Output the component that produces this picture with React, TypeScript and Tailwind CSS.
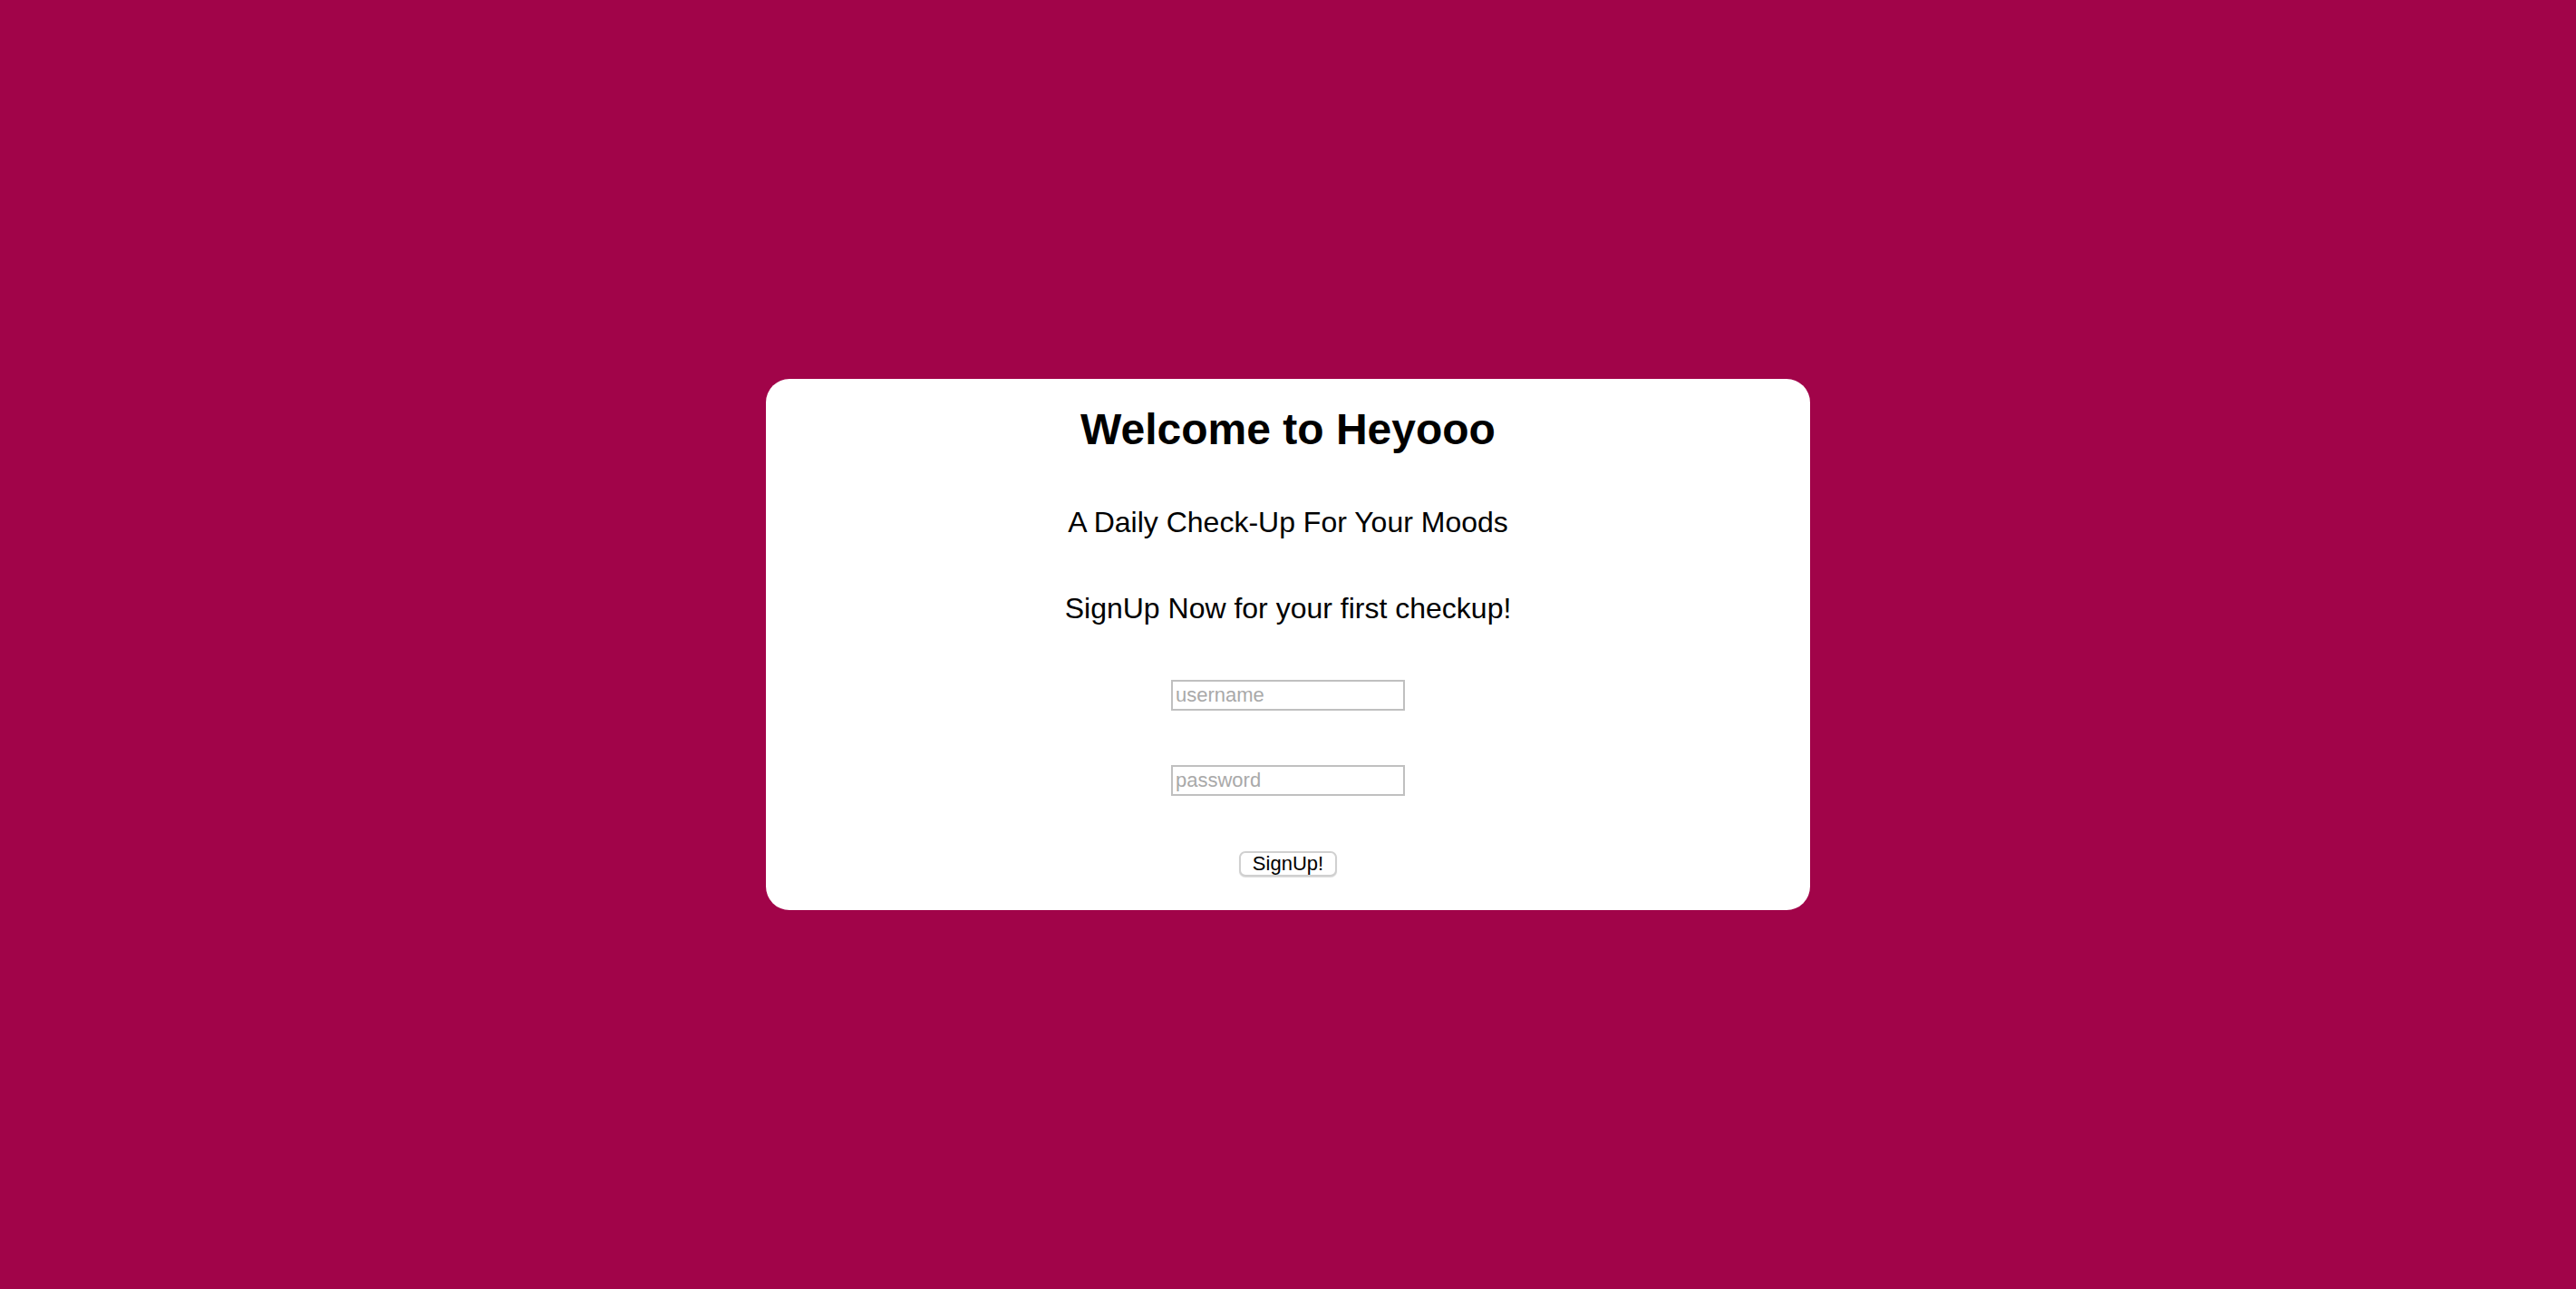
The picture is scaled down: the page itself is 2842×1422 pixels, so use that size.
export default function App() {
  return (
    <div className="flex min-h-screen w-full items-center justify-center bg-[#a10449] font-['Liberation_Sans',Arial,sans-serif] text-black">
      <div className="flex w-[1152px] flex-col items-center rounded-[26px] bg-white pt-[28px] pb-[37px]">
        <h1 className="text-[48px] font-bold leading-[56px]">Welcome to Heyooo</h1>
        <p className="mt-[54px] text-[32px] leading-[40px]">A Daily Check-Up For Your Moods</p>
        <p className="mt-[55px] text-[32px] leading-[40px]">SignUp Now for your first checkup!</p>
        <form className="flex flex-col items-center">
          <input
            type="text"
            placeholder="username"
            className="mt-[59px] h-[34px] w-[258px] border-2 border-[#c0c0c0] bg-white px-[3px] text-[22px] text-black outline-none placeholder:text-[#a9a9a9]"
          />
          <input
            type="password"
            placeholder="password"
            className="mt-[60px] h-[34px] w-[258px] border-2 border-[#c0c0c0] bg-white px-[3px] text-[22px] text-black outline-none placeholder:text-[#a9a9a9]"
          />
          <button
            type="button"
            className="mt-[61px] h-[28px] w-[108px] rounded-[7px] border-2 border-[#d0d0d0] bg-white text-[22px] leading-none text-black shadow-[0_1px_1px_rgba(0,0,0,0.15)]"
          >
            SignUp!
          </button>
        </form>
      </div>
    </div>
  );
}
